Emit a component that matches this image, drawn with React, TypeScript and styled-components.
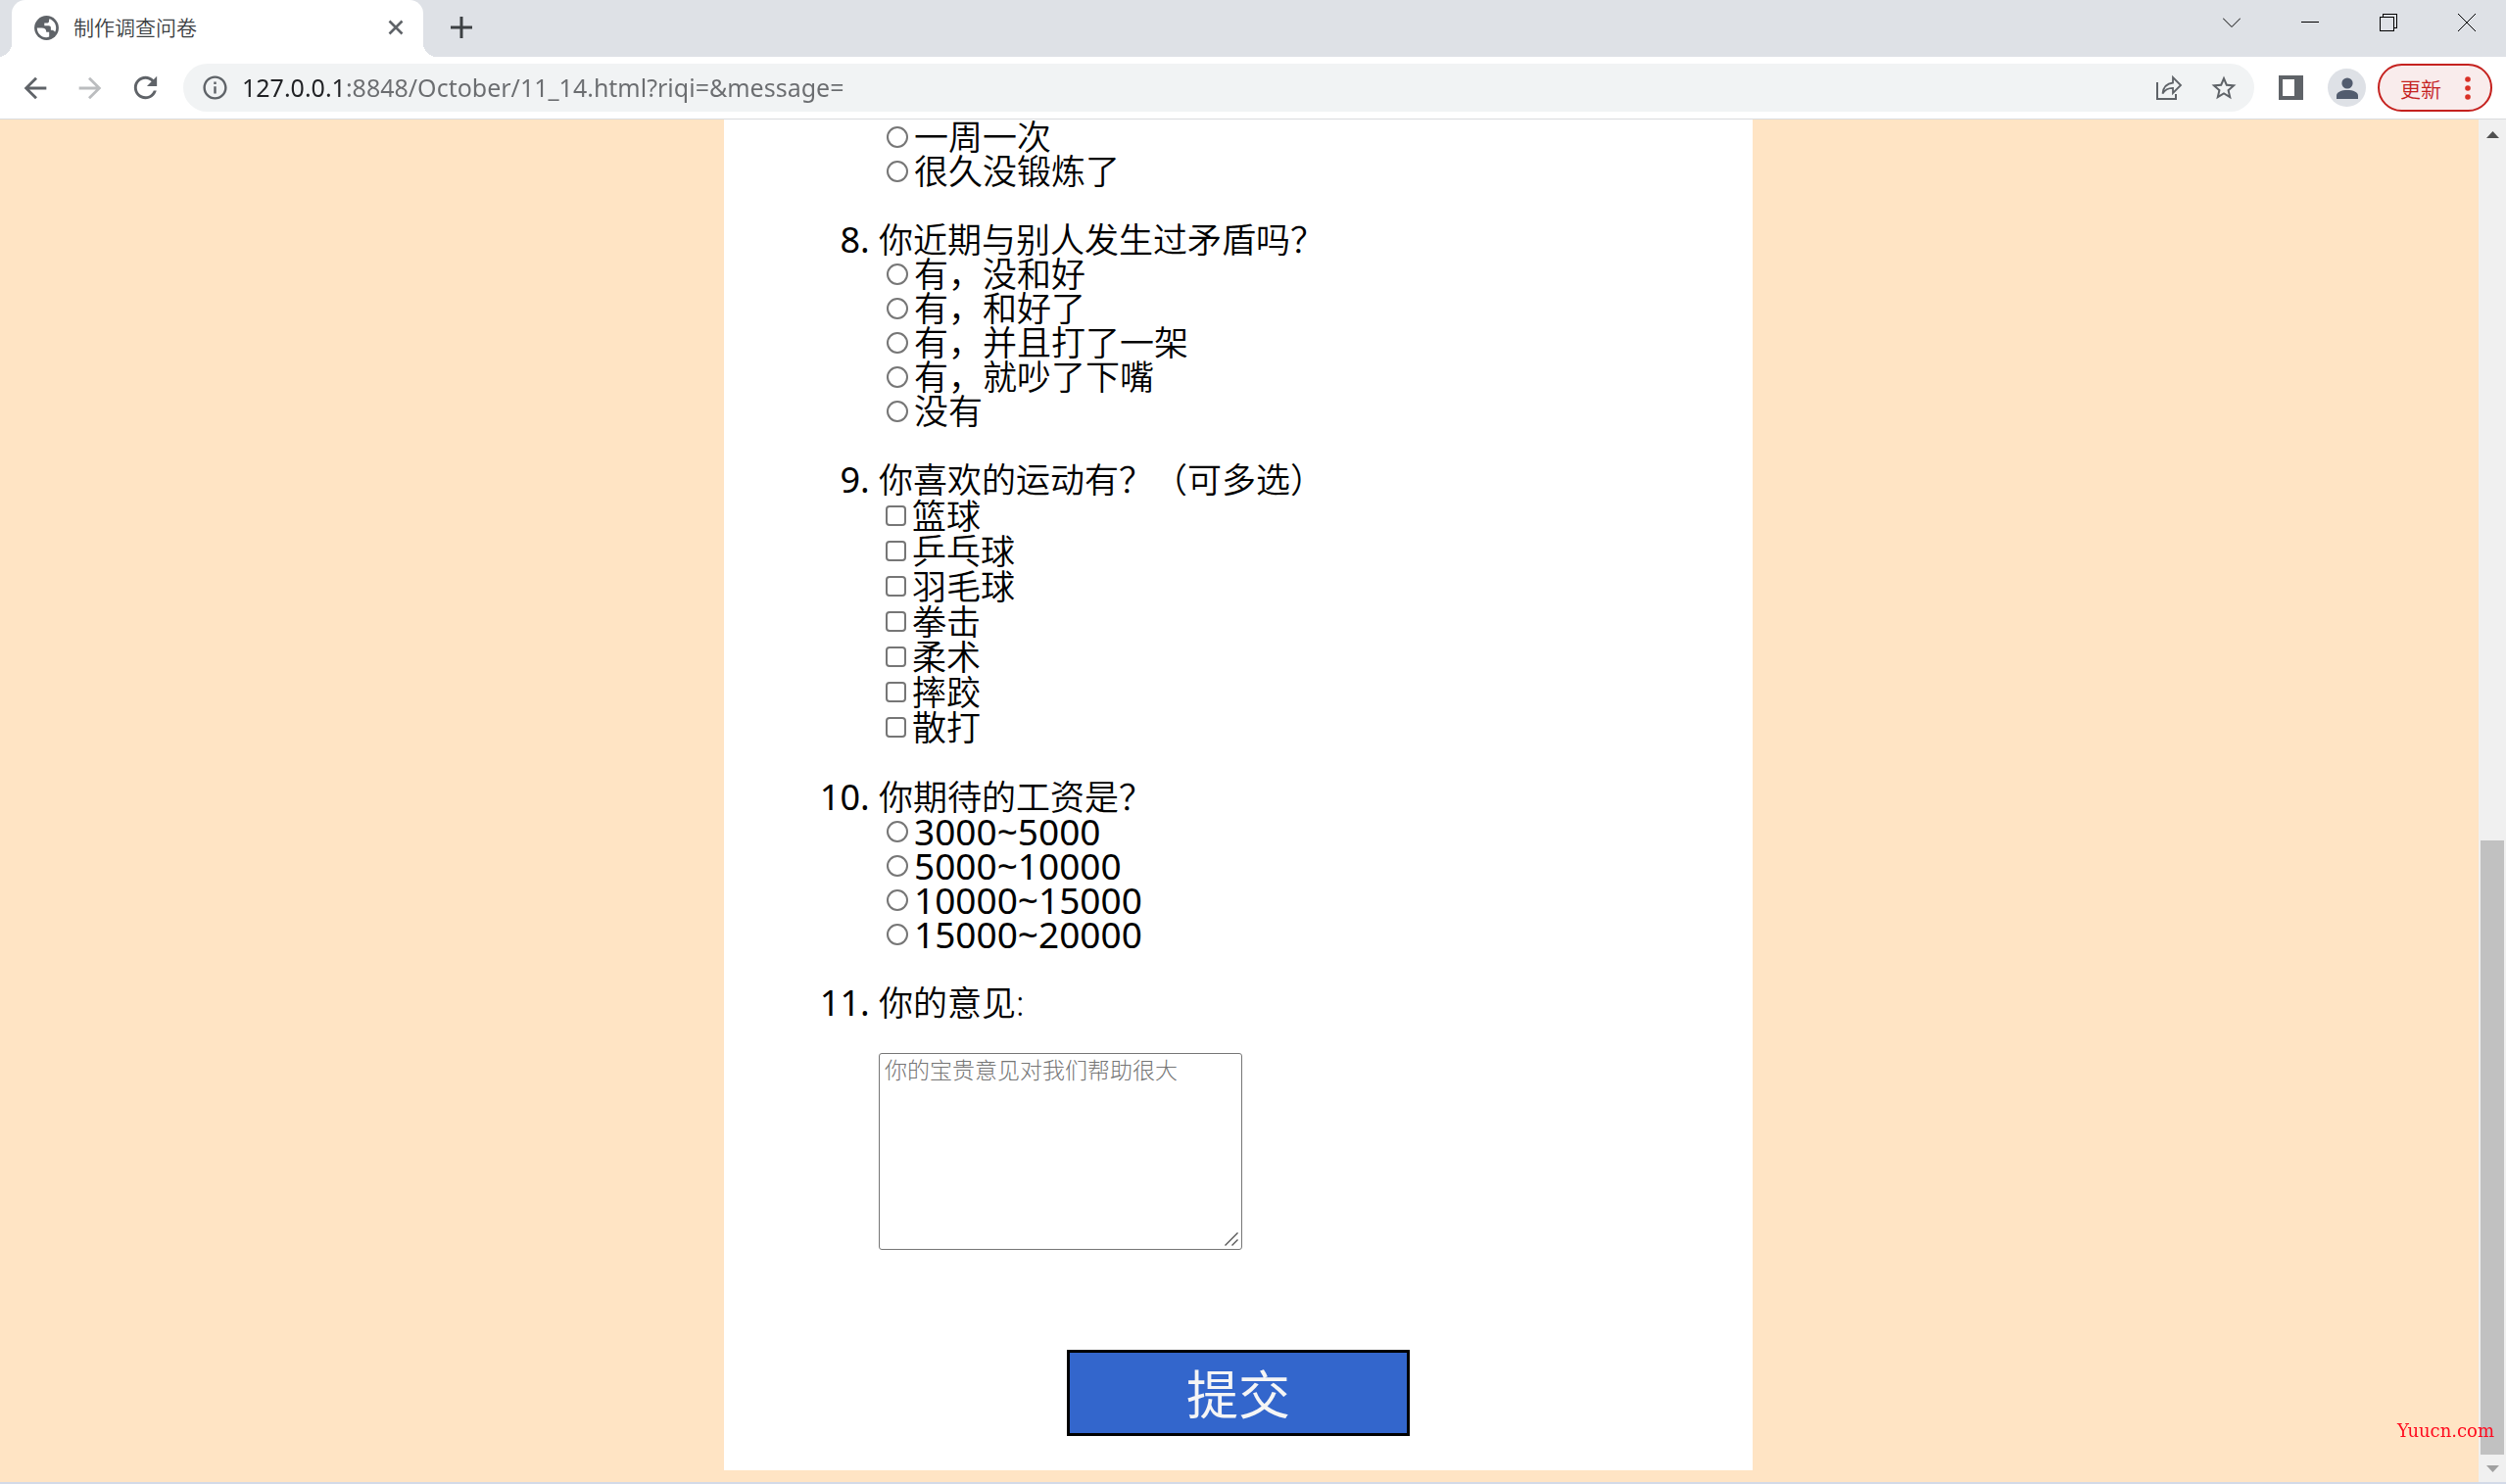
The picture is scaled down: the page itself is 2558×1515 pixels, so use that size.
import React from "react";
import styled, { createGlobalStyle, css } from "styled-components";

const GlobalStyle = createGlobalStyle`
  *, *::before, *::after { box-sizing: border-box; }
  body {
    margin: 0;
    background: #dee1e6;
    font-family: "Noto Sans", "Noto Sans CJK SC", sans-serif;
  }
  button, input, textarea { font-family: inherit; }
`;

const Browser = styled.div`
  display: flex;
  flex-direction: column;
  height: 100vh;
  overflow: hidden;
  border-bottom: 2px solid #d3dae8;
`;

/* ---------- tab strip ---------- */

const TabStrip = styled.header`
  display: flex;
  flex: none;
  height: 58px;
  padding-left: 12px;
  background: #dee1e6;
`;

const Tab = styled.div`
  position: relative;
  display: flex;
  align-items: center;
  width: 420px;
  padding: 0 15px 2px 23px;
  background: #fff;
  border-radius: 14px 14px 0 0;

  &::before,
  &::after {
    content: "";
    position: absolute;
    bottom: 0;
    width: 14px;
    height: 14px;
  }
  &::before {
    right: 100%;
    background: radial-gradient(circle at 0 0, transparent 14px, #fff 14px);
  }
  &::after {
    left: 100%;
    background: radial-gradient(circle at 100% 0, transparent 14px, #fff 14px);
  }
`;

const TabTitle = styled.span`
  flex: 1;
  margin-left: 15px;
  color: #3c4043;
  font-size: 21px;
  font-weight: 350;
  line-height: 28px;
`;

const IconButton = styled.button<{ $w: number; $h?: number }>`
  display: flex;
  flex: none;
  align-items: center;
  justify-content: center;
  width: ${(p) => p.$w}px;
  height: ${(p) => p.$h ?? 48}px;
  padding: 0;
  border: 0;
  background: none;
  color: #5f6368;
`;

const NewTab = styled(IconButton)`
  margin: 4px 0 0 15px;
  color: #3c4043;
`;

const WindowControls = styled.div`
  display: flex;
  margin-left: auto;
`;

const WindowButton = styled(IconButton)`
  color: #000;
`;

/* ---------- toolbar ---------- */

const Toolbar = styled.nav`
  display: flex;
  flex: none;
  align-items: center;
  height: 64px;
  padding: 0 14px 0 8px;
  background: #fff;
  border-bottom: 1px solid #d9dbde;
`;

const AddressBar = styled.div`
  display: flex;
  flex: 1;
  align-items: center;
  height: 49px;
  margin: 0 9px 0 10px;
  padding: 0 3px 0 8px;
  border-radius: 25px;
  background: #f1f3f4;
`;

const AddressInput = styled.input`
  flex: 1;
  min-width: 0;
  height: 40px;
  padding: 0 0 2px;
  margin-left: 4px;
  border: 0;
  outline: 0;
  background: linear-gradient(90deg, #202124 104px, #6b6d70 104px);
  background-clip: text;
  -webkit-background-clip: text;
  color: transparent;
  font-size: 25px;
`;

const Avatar = styled.button`
  display: flex;
  align-items: center;
  justify-content: center;
  width: 39px;
  height: 39px;
  margin: 0 12px 0 10px;
  padding: 0;
  border: 0;
  border-radius: 50%;
  background: #dee1e6;
`;

const UpdateButton = styled.button`
  display: flex;
  align-items: center;
  justify-content: space-between;
  width: 117px;
  height: 49px;
  padding: 0 20px 0 21px;
  border: 2px solid #c5221f;
  border-radius: 25px;
  background: #f9ecec;
  color: #c5221f;
  font-size: 21px;
  font-weight: 350;
`;

/* ---------- page ---------- */

const Viewport = styled.div`
  display: flex;
  flex: 1;
  min-height: 0;
`;

const Page = styled.main`
  flex: 1;
  padding-right: 2px;
  overflow: hidden;
  background: #ffe4c4;
`;

const Sheet = styled.form`
  width: 1050px;
  max-width: 100%;
  margin: 0 auto;
  padding-bottom: 35px;
  background: #fff;
  color: #000;
`;

const Questions = styled.ol`
  margin: 0;
  padding: 0 35px 0 158px;
  font-size: 35px;
  font-weight: 350;
  line-height: 35px;
`;

const Question = styled.li<{ $continued?: boolean }>`
  margin-bottom: 35px;
  &::marker {
    font-size: 36px;
    font-weight: 400;
  }
  ${(p) =>
    p.$continued &&
    css`
      list-style: none;
    `}
`;

const Prompt = styled.div`
  height: 35px;
`;

const Options = styled.div<{ $spaced?: boolean }>`
  display: flex;
  flex-direction: column;
  align-items: flex-start;
  padding: ${(p) => (p.$spaced ? "1px 0 1px 7px" : "0 0 0 8px")};
`;

const Option = styled.label<{ $box?: boolean; $numeric?: boolean }>`
  display: flex;
  align-items: center;
  gap: 6px;
  height: ${(p) => (p.$box ? 36 : 35)}px;
  ${(p) =>
    p.$numeric &&
    css`
      font-size: 37px;
      font-weight: 400;
    `}
`;

const Choice = styled.input`
  appearance: none;
  flex: none;
  width: ${(p) => (p.type === "radio" ? 22 : 21)}px;
  height: ${(p) => (p.type === "radio" ? 22 : 21)}px;
  margin: 0;
  border: 2px solid #767676;
  border-radius: ${(p) => (p.type === "radio" ? "50%" : "4px")};
  background: #fff;
  &:checked {
    background: #0075ff;
  }
`;

const CommentBox = styled.div`
  position: relative;
  width: 371px;
  height: 201px;
  margin-top: 34px;
`;

const Comment = styled.textarea`
  display: block;
  width: 100%;
  height: 100%;
  padding: 2px 5px;
  border: 1px solid #767676;
  border-radius: 3px;
  background: #fff;
  font-size: 23px;
  font-weight: 300;
  line-height: 28px;
  resize: none;
  &::placeholder {
    color: #757575;
  }
`;

const Grip = styled.svg`
  position: absolute;
  right: 4px;
  bottom: 4px;
  pointer-events: none;
`;

const Submit = styled.button`
  display: block;
  width: 350px;
  height: 88px;
  margin: 102px auto 0;
  padding: 4px 0 0;
  border: 3px solid #000;
  background: #3366cc;
  color: #f5f5f5;
  font-size: 53px;
  line-height: 76px;
`;

/* ---------- scrollbar ---------- */

const Scrollbar = styled.div`
  display: flex;
  flex: none;
  flex-direction: column;
  align-items: center;
  width: 28px;
  background: #f0f0f0;
`;

const Arrow = styled.svg`
  flex: none;
  width: 28px;
  height: 28px;
`;

const Track = styled.div`
  display: flex;
  flex: 1;
  flex-direction: column;
  justify-content: flex-end;
  width: 24px;
`;

const Thumb = styled.div`
  height: 47%;
  background: #c1c1c1;
`;

const Watermark = styled.div`
  position: fixed;
  right: 12px;
  bottom: 44px;
  color: #ff0a1e;
  font-family: "DejaVu Serif", serif;
  font-size: 18px;
  line-height: 20px;
`;

/* ---------- icons ---------- */

const Stroke = (p: { w: number; h: number; d: string; sw: number; crisp?: boolean }) => (
  <svg width={p.w} height={p.h} viewBox={`0 0 ${p.w} ${p.h}`} fill="none" stroke="currentColor"
    strokeWidth={p.sw} shapeRendering={p.crisp ? "crispEdges" : undefined} aria-hidden="true">
    <path d={p.d} />
  </svg>
);

const Glyph = (p: { size: number; d: string; fill?: string }) => (
  <svg width={p.size} height={p.size} viewBox="0 0 24 24" fill={p.fill ?? "currentColor"} aria-hidden="true">
    <path d={p.d} />
  </svg>
);

const Globe = () => (
  <svg width="25" height="25" viewBox="0 0 25 25" aria-hidden="true">
    <circle cx="12.500" cy="12.500" r="12.400" fill="#5f6368" />
    <path d="M2.800 12.500h4.500c3.400 0 5 1.300 5 4.200h2.900v4.800c-1 .5-2 .7-3 .7-5.200 0-9.400-4.300-9.400-9.700z" fill="#fff" />
    <path d="M15.400 3.300c4 1.300 6.800 5 6.800 9.200 0 1.600-.4 3-1.100 4.300-.9-1.600-2.100-2.100-4.200-2v-2.300c0-1.600-.8-2.300-2.300-2.300h-4.300V7.600h2.300c1.600 0 2.400-.8 2.400-2.200 0-.8.200-1.500.4-2.100z" fill="#fff" />
  </svg>
);

const ShareIcon = () => (
  <svg width="28" height="28" viewBox="0 0 28 28" fill="none" stroke="currentColor" strokeWidth="2" aria-hidden="true">
    <path d="M2 8v17h19v-5" />
    <path d="M7.500 19.500c.8-6.800 4-10.300 10.500-11V3l8 8-8 8v-5.200c-4.900 0-8.200 1.700-10.500 5.700z" strokeWidth="1.800" />
  </svg>
);

const SidePanelIcon = () => (
  <svg width="25" height="25" viewBox="0 0 25 25" shapeRendering="crispEdges" aria-hidden="true">
    <path d="M0 0h25v25H0z" fill="#5f6368" />
    <path d="M4 4h12v17H4z" fill="#fff" />
  </svg>
);

const PersonIcon = () => (
  <svg width="22" height="22" viewBox="0 0 22 22" fill="#525c6e" aria-hidden="true">
    <circle cx="11" cy="6" r="5.600" />
    <path d="M0 22v-3.500C0 15 5 13 11 13s11 2 11 5.500V22z" />
  </svg>
);

const BACK = "M20 11H7.830l5.590-5.590L12 4l-8 8 8 8 1.410-1.410L7.830 13H20v-2z";
const FORWARD = "M12 4l-1.410 1.410L16.170 11H4v2h12.170l-5.580 5.590L12 20l8-8z";
const RELOAD =
  "M17.650 6.350C16.200 4.900 14.210 4 12 4c-4.420 0-7.990 3.580-7.990 8s3.570 8 7.990 8c3.730 0 6.840-2.550 7.730-6h-2.080c-.82 2.330-3.040 4-5.650 4-3.310 0-6-2.690-6-6s2.690-6 6-6c1.660 0 3.140.69 4.220 1.780L13 11h7V4l-2.350 2.350z";
const INFO =
  "M11 17h2v-6h-2v6zm1-15C6.480 2 2 6.480 2 12s4.480 10 10 10 10-4.480 10-10S17.520 2 12 2zm0 18c-4.410 0-8-3.590-8-8s3.590-8 8-8 8 3.590 8 8-3.590 8-8 8zM11 9h2V7h-2v2z";
const STAR =
  "M22 9.240l-7.190-.62L12 2 9.190 8.630 2 9.240l5.460 4.730L5.820 21 12 17.270 18.180 21l-1.630-7.030L22 9.240zM12 15.400l-3.760 2.270 1-4.280-3.320-2.880 4.380-.38L12 6.100l1.710 4.040 4.380.38-3.320 2.880 1 4.280L12 15.400z";

/* ---------- survey data ---------- */

type Item = { id: number; prompt?: string; type: "radio" | "checkbox"; options: string[]; numeric?: boolean };

const ITEMS: Item[] = [
  { id: 7, type: "radio", options: ["一周一次", "很久没锻炼了"] },
  {
    id: 8,
    prompt: "你近期与别人发生过矛盾吗？",
    type: "radio",
    options: ["有，没和好", "有，和好了", "有，并且打了一架", "有，就吵了下嘴", "没有"],
  },
  {
    id: 9,
    prompt: "你喜欢的运动有？（可多选）",
    type: "checkbox",
    options: ["篮球", "乒乓球", "羽毛球", "拳击", "柔术", "摔跤", "散打"],
  },
  {
    id: 10,
    prompt: "你期待的工资是？",
    type: "radio",
    options: ["3000~5000", "5000~10000", "10000~15000", "15000~20000"],
    numeric: true,
  },
];

export default function App() {
  return (
    <>
      <GlobalStyle />
      <Browser>
        <TabStrip>
          <Tab>
            <Globe />
            <TabTitle>制作调查问卷</TabTitle>
            <IconButton $w={26} aria-label="关闭标签页">
              <Stroke w={16} h={16} d="M1.500 1.500l13 13M14.500 1.500l-13 13" sw={2.600} />
            </IconButton>
          </Tab>
          <NewTab $w={48} aria-label="打开新的标签页">
            <Stroke w={22} h={22} d="M11 0v22M0 11h22" sw={3} />
          </NewTab>
          <WindowControls>
            <WindowButton $w={80} $h={46} aria-label="搜索标签页">
              <Stroke w={18} h={10} d="M0 .5l9 9 9-9" sw={1} />
            </WindowButton>
            <WindowButton $w={80} $h={46} aria-label="最小化">
              <Stroke w={18} h={2} d="M0 .5h18" sw={1} crisp />
            </WindowButton>
            <WindowButton $w={80} $h={46} aria-label="还原">
              <Stroke w={18} h={18} d="M.5 3.500h14v14H.5zM3.500 3.500v-3h14v14h-3" sw={1} crisp />
            </WindowButton>
            <WindowButton $w={80} $h={46} aria-label="关闭">
              <Stroke w={18} h={18} d="M0 0l18 18M18 0L0 18" sw={1} />
            </WindowButton>
          </WindowControls>
        </TabStrip>

        <Toolbar>
          <IconButton $w={56} aria-label="后退">
            <Glyph size={34} d={BACK} />
          </IconButton>
          <IconButton $w={56} aria-label="前进" disabled>
            <Glyph size={34} d={FORWARD} fill="#bbbdbf" />
          </IconButton>
          <IconButton $w={57} aria-label="重新加载">
            <Glyph size={35} d={RELOAD} />
          </IconButton>
          <AddressBar>
            <IconButton $w={48} aria-label="查看网站信息">
              <Glyph size={29} d={INFO} />
            </IconButton>
            <AddressInput aria-label="地址栏" defaultValue="127.0.0.1:8848/October/11_14.html?riqi=&message=" />
            <IconButton $w={56} aria-label="分享">
              <ShareIcon />
            </IconButton>
            <IconButton $w={56} aria-label="收藏">
              <Glyph size={30} d={STAR} />
            </IconButton>
          </AddressBar>
          <IconButton $w={56} aria-label="侧边栏">
            <SidePanelIcon />
          </IconButton>
          <Avatar aria-label="个人资料">
            <PersonIcon />
          </Avatar>
          <UpdateButton>
            更新
            <svg width="6" height="24" viewBox="0 0 6 24" fill="#d93025" aria-hidden="true">
              <circle cx="3" cy="3" r="2.800" />
              <circle cx="3" cy="12" r="2.800" />
              <circle cx="3" cy="21" r="2.800" />
            </svg>
          </UpdateButton>
        </Toolbar>

        <Viewport>
          <Page>
            <Sheet onSubmit={(e) => e.preventDefault()}>
              <Questions start={7}>
                {ITEMS.map((item) => (
                  <Question key={item.id} $continued={!item.prompt}>
                    {item.prompt && <Prompt id={`q${item.id}`}>{item.prompt}</Prompt>}
                    <Options
                      role="group"
                      aria-labelledby={item.prompt ? `q${item.id}` : undefined}
                      $spaced={item.type === "checkbox"}
                    >
                      {item.options.map((text) => (
                        <Option key={text} $box={item.type === "checkbox"} $numeric={item.numeric}>
                          <Choice type={item.type} name={`q${item.id}`} />
                          {text}
                        </Option>
                      ))}
                    </Options>
                  </Question>
                ))}
                <Question>
                  <Prompt as="label" htmlFor="message">
                    你的意见:
                  </Prompt>
                  <CommentBox>
                    <Comment id="message" name="message" placeholder="你的宝贵意见对我们帮助很大" />
                    <Grip width="14" height="14" viewBox="0 0 14 14" fill="none" stroke="#555" strokeWidth="1.400">
                      <path d="M.5 13.500l13-13M7.500 13.500l6-6" />
                    </Grip>
                  </CommentBox>
                </Question>
              </Questions>
              <Submit type="submit">提交</Submit>
            </Sheet>
          </Page>
          <Scrollbar aria-hidden="true">
            <Arrow viewBox="0 0 28 28">
              <path d="M8 19l6.500-7 6.500 7z" fill="#505050" />
            </Arrow>
            <Track>
              <Thumb />
            </Track>
            <Arrow viewBox="0 0 28 28">
              <path d="M8 11l6.500 7 6.500-7z" fill="#a0a0a0" />
            </Arrow>
          </Scrollbar>
        </Viewport>
      </Browser>
      <Watermark>Yuucn.com</Watermark>
    </>
  );
}
